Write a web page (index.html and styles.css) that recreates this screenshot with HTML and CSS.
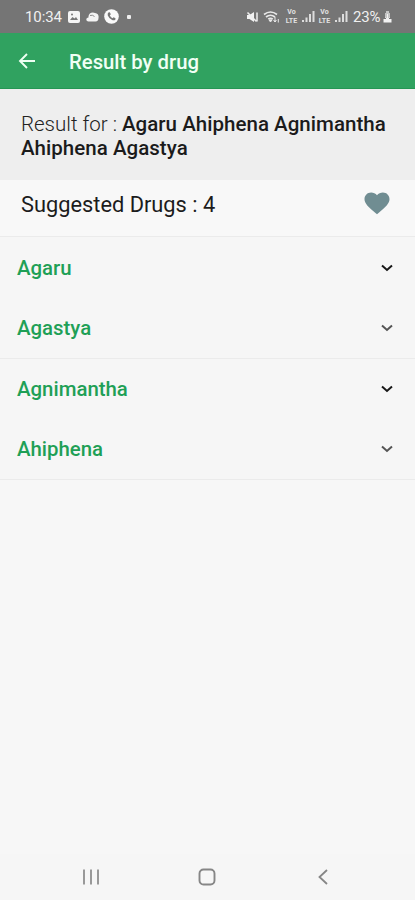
FILE: index.html
```html
<!DOCTYPE html>
<html lang="en">
<head>
<meta charset="utf-8">
<meta name="viewport" content="width=device-width, initial-scale=1">
<title>Result by drug</title>
<link rel="stylesheet" href="styles.css">
</head>
<body>
<div class="screen">
  <header class="status">
    <div class="status-left">
      <span class="clock">10:34</span>
      <svg class="gallery" width="12" height="12" viewBox="0 0 12 12"><rect width="12" height="12" rx="2" fill="#f4f4f4"/><path d="M2 9l2.500-3 2 1.500L8 6l2 3z" fill="#777"/><circle cx="4" cy="3.500" r="1" fill="#777"/></svg>
      <svg class="cloud" width="13" height="10" viewBox="0 0 13 10"><path d="M2.500 9.500C-.5 9.500-.3 5.500 2.500 5.500 2 1 6.500-.5 9 1c3 .2 4 2.500 3.500 5 0 2-1 3.500-3 3.500z" fill="#f4f4f4"/><path d="M4 3.500q2.500-1 4.500 1" stroke="#8a8a8a" fill="none"/></svg>
      <svg class="call" width="15" height="15" viewBox="0 0 15 15"><circle cx="7.500" cy="7.500" r="7.300" fill="#fafafa"/><path d="M4.400 3.500l1.400-.2 1 2-1 1.200q.8 1.800 2.600 2.700l1.200-1 1.900 1-.2 1.500q-1.200 1.100-3.200.2-3-1.300-4.300-4.500-.5-1.800.6-2.900z" fill="#777"/></svg>
      <span class="dot"></span>
    </div>
    <div class="status-right">
      <svg width="13" height="14" viewBox="0 0 13 14"><path d="M1 5h2.500L8 2v10L3.500 9H1z" fill="#f2f2f2"/><path d="M1.500 2.500l9 9M11 2.500v9" stroke="#eee" stroke-width="1.500"/></svg>
      <svg class="wifi" width="17" height="14" viewBox="0 0 17 14"><path d="M1 4.500q6.500-5 13 0M3 7q4.500-3.500 9 0M5.200 9.200q2.300-1.800 4.600 0" fill="none" stroke="#e8e8e8" stroke-width="1.700"/><path d="M6 10l1.500 2L9 10zM12 7v5m-1.500-1.500L12 12l1.500-1.500M15.300 12.500V9" stroke="#e8e8e8" fill="#e8e8e8"/></svg>
      <span class="volte"><span>Vo</span><span>LTE</span></span>
      <svg class="signal" width="13" height="13" viewBox="0 0 13 13"><path d="M1 12v-2M4.500 12V7.500M8 12V4M11.500 12V1" stroke="#ddd" stroke-width="2"/></svg>
      <span class="volte"><span>Vo</span><span>LTE</span></span>
      <svg class="signal" width="13" height="13" viewBox="0 0 13 13"><path d="M1 12v-2M4.500 12V7.500M8 12V4M11.500 12V1" stroke="#ddd" stroke-width="2"/></svg>
      <span class="percent">23%</span>
      <svg class="battery" width="9" height="13" viewBox="0 0 9 13"><path d="M3 1h3v2h1v5H2V3h1z" fill="#c4c4c4"/><path d="M.5 9h8v3.500h-8z" fill="#f2f2f2"/><path d="M4.500 4v5M2.500 7.500l2 2 2-2" stroke="#f2f2f2" fill="none"/></svg>
    </div>
  </header>
  <div class="appbar">
    <svg class="back" width="18" height="18" viewBox="0 0 18 18"><path d="M17 9H2M9 2L2 9l7 7" fill="none" stroke="#eefff2" stroke-width="1.900"/></svg>
    <h1>Result by drug</h1>
  </div>
  <section class="query"><span>Result for : </span><b>Agaru Ahiphena Agnimantha<br>Ahiphena Agastya</b></section>
  <section class="summary">
    <span>Suggested Drugs : 4</span>
    <svg width="26" height="23" viewBox="0 0 26 23"><path d="M13 22.300L10.900 20.500C4.500 14.900.5 11.500.5 7.200.5 3.500 3.400.6 7.100.6c2.300 0 4.500 1 5.900 2.700C14.400 1.600 16.600.6 18.900.6c3.700 0 6.600 2.900 6.600 6.600 0 4.300-4 7.700-10.400 13.300z" fill="#708d92"/></svg>
  </section>
  <main>
    <div class="row first"><span>Agaru</span><svg class="chevron" width="14" height="10" viewBox="0 0 14 10"><path d="M2 2.500l5 4.500 5-4.500"/></svg></div>
    <div class="row soft line"><span>Agastya</span><svg class="chevron" width="14" height="10" viewBox="0 0 14 10"><path d="M2 2.500l5 4.500 5-4.500"/></svg></div>
    <div class="row"><span>Agnimantha</span><svg class="chevron" width="14" height="10" viewBox="0 0 14 10"><path d="M2 2.500l5 4.500 5-4.500"/></svg></div>
    <div class="row soft line"><span>Ahiphena</span><svg class="chevron" width="14" height="10" viewBox="0 0 14 10"><path d="M2 2.500l5 4.500 5-4.500"/></svg></div>
  </main>
  <nav class="navbar">
    <svg width="18" height="18" viewBox="0 0 18 18"><path d="M2 1.500v15M9 1.500v15M16 1.500v15" stroke="#999" stroke-width="2"/></svg>
    <svg width="18" height="18" viewBox="0 0 18 18"><rect x="1.500" y="1.500" width="15" height="15" rx="4" fill="none" stroke="#868686" stroke-width="1.900"/></svg>
    <svg width="18" height="18" viewBox="0 0 18 18"><path d="M13 2L5.500 9l7.500 7" fill="none" stroke="#868686" stroke-width="1.800"/></svg>
  </nav>
</div>
</body>
</html>
```
FILE: styles.css
```css
* { box-sizing: border-box; }
body { margin: 0; background: #f7f7f7; font-family: Roboto, "Liberation Sans", sans-serif; color: #1c1c1c; }
svg { display: block; flex: none; }
.screen { width: 415px; height: 900px; display: flex; flex-direction: column; }
.status { height: 33px; background: #757575; color: #f0f0f0; display: flex; justify-content: space-between; padding: 0 23px 0 25px; font-size: 15px; }
.status-left, .status-right { display: flex; align-items: center; height: 33px; }
.clock { letter-spacing: -0.1px; }
.gallery { margin-left: 6px; }
.cloud { margin-left: 6px; }
.call { margin-left: 5px; }
.dot { width: 4px; height: 4px; border-radius: 1px; background: #eee; margin-left: 8px; }
.wifi { margin-left: 4px; }
.volte { width: 15px; margin-left: 4px; display: flex; flex-direction: column; align-items: center; font-size: 7px; line-height: 9px; font-weight: 700; color: #e2e2e2; }
.signal { margin-left: 3px; }
.signal + .volte { margin-left: 2px; }
.percent { margin-left: 5px; width: 28px; white-space: nowrap; letter-spacing: -0.2px; }
.battery { margin-left: 2px; }
.appbar { height: 56px; background: #30a260; border-bottom: 1px solid #259654; display: flex; align-items: center; padding-left: 18px; }
.back { margin-right: 33px; }
h1 { margin: 3px 0 0; font-size: 20.3px; line-height: 24px; font-weight: 500; color: #f0fff4; }
.query { height: 91px; padding: 23px 0 0 21px; background: #eee; font-size: 20.5px; line-height: 24px; white-space: nowrap; color: #222; font-weight: 300; }
.query b { font-weight: 500; color: #1b1b1b; letter-spacing: 0.03px; }
.summary { height: 57px; border-bottom: 1px solid #ebebeb; display: flex; justify-content: space-between; padding: 12px 25px 0 21px; font-size: 21.8px; line-height: 25px; background: #f8f8f8; }
.row { height: 60px; display: flex; align-items: center; justify-content: space-between; padding: 0 21px 0 17px; background: #f6f6f6; color: #1fa056; font-size: 20.4px; font-weight: 500; }
.row.first { height: 61px; }
.row.line { height: 61px; border-bottom: 1px solid #ebebeb; }
.chevron path { fill: none; stroke: #171717; stroke-width: 2; }
.soft .chevron path { stroke: #555; }
.navbar { margin-top: auto; height: 46px; background: #f6f6f6; display: flex; justify-content: space-between; align-items: center; padding: 0 83px 0 82px; }
```
